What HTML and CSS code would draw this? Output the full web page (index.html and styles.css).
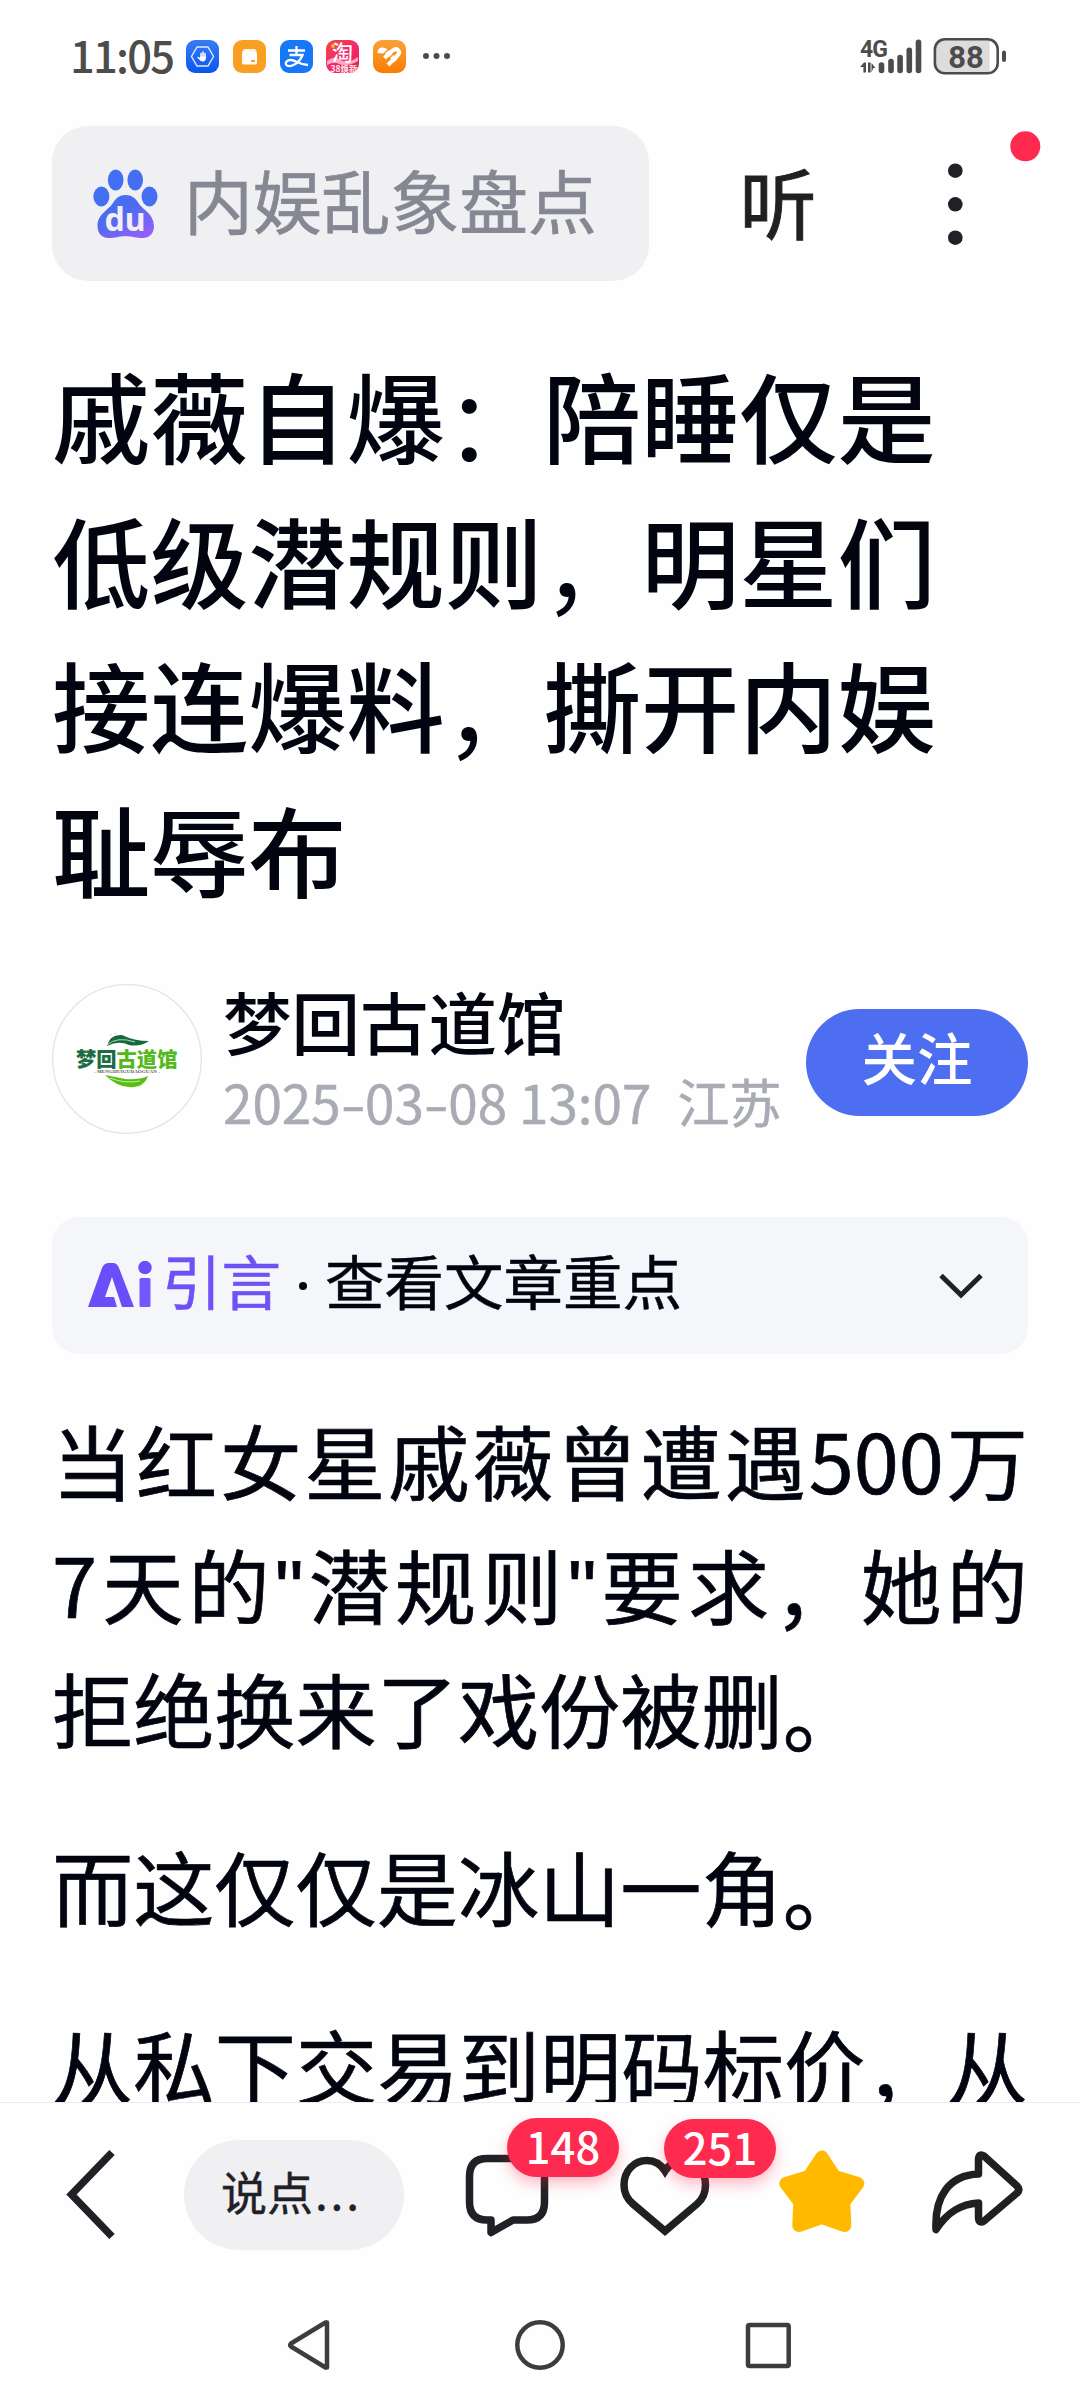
FILE: index.html
```html
<!DOCTYPE html>
<html lang="zh-CN">
<head>
<meta charset="utf-8">
<title>戚薇自爆</title>
<link rel="stylesheet" href="styles.css">
</head>
<body>
<div class="screen">
  <div class="status">
    <span class="clock">11:05</span>
    <div class="apps">
      <svg class="app" viewBox="0 0 33 33"><defs><linearGradient id="gb" x2="0" y2="1"><stop stop-color="#3a7cf5"/><stop offset="1" stop-color="#0a55ee"/></linearGradient></defs><rect width="33" height="33" rx="9" fill="url(#gb)"/><path d="M11 7h11l5.500 9.500-5.500 9.500H11L5.500 16.500z" fill="none" stroke="#dfeaff" stroke-width="1.400"/><path d="M15 17v-3.500M17 17v-5M19 17v-3.500M14.500 19.500l-2.500-2" stroke="#fff" stroke-width="1.500" stroke-linecap="round"/><path d="M14.200 16.500h5.600v2q-.3 3-3 3-2.600 0-3.600-2.500z" fill="#fff"/></svg>
      <svg class="app" viewBox="0 0 33 33"><rect width="33" height="33" rx="9" fill="#f8a024"/><path d="M11 9h11l2 3H9z" fill="#fff5df"/><rect x="9" y="11.500" width="15" height="13" rx="2" fill="#fff"/><path d="M18 20h4v2h-4z" fill="#f8a024"/></svg>
      <svg class="app" viewBox="0 0 33 33"><rect width="33" height="33" rx="9" fill="#1677f8"/><path d="M8 10.500h17M16.500 6v9M9.500 15h13q-2.500 6.500-8 9.500-4.500 2.500-7.500 1-3-2.500 1-5 3.500-1.500 9 1.500 5 2.500 11 3" fill="none" stroke="#fff" stroke-width="2.300"/></svg>
      <svg class="app" viewBox="0 0 33 33"><defs><linearGradient id="gt" x1="0" x2="1" y2="1"><stop stop-color="#ef4a3d"/><stop offset=".5" stop-color="#f42a6c"/><stop offset="1" stop-color="#e61e4b"/></linearGradient></defs><rect width="33" height="33" rx="9" fill="url(#gt)"/><path d="M1 21q8-6 12-2 8 6 19-2v4q-10 6-19 3-5-3-12 1z" fill="#ffa9c4"/><circle cx="7" cy="6" r="2" fill="#ffb52e"/><text x="6" y="20" class="tao">淘</text><text x="4.500" y="31.500" class="sale">38焕新</text></svg>
      <svg class="app" viewBox="0 0 33 33"><defs><linearGradient id="go" x2="0" y2="1"><stop stop-color="#f9a13a"/><stop offset="1" stop-color="#fb7c02"/></linearGradient></defs><rect width="33" height="33" rx="9" fill="url(#go)"/><path d="M4.500 13q0-5.500 5-5.500 3 0 5 2l10 9.500-3 3-8.500-8z" fill="#fff"/><path d="M11.500 18l8-7.500q3-2.500 5.500-.5 2.500 2.500-.5 5.500l-9.500 9.500" fill="none" stroke="#fff" stroke-width="4"/><path d="M9.500 15l7.500-7" stroke="#fa9122" stroke-width="1.300"/><path d="M14 20l7-6.500" stroke="#fa8a18" stroke-width="1.300"/></svg>
    </div>
    <svg class="more" width="30" height="10" viewBox="0 0 30 10"><g fill="#4c4c4c"><circle cx="4" cy="5" r="3"/><circle cx="14.500" cy="5" r="3"/><circle cx="25" cy="5" r="3"/></g></svg>
    <svg class="signal" width="150" height="42" viewBox="858 34 150 42"><text x="860" y="56" class="net">4G</text><g fill="#4c4c4c"><path d="M860 66l4-4.500h2V71.500h-2.600V66zM868 61.500h2.600V71.500H868zM871.500 71.500V62l4 5h-2.200z"/><rect x="878.700" y="61.300" width="5.600" height="11" rx="2.800"/><rect x="888.200" y="57.700" width="5.600" height="14.600" rx="2.800"/><rect x="897.300" y="53.700" width="5.600" height="18.600" rx="2.800"/><rect x="906.500" y="46.500" width="5.600" height="25.800" rx="2.800"/><rect x="915.700" y="38.500" width="5.600" height="33.800" rx="2.800"/><rect x="1002" y="49.500" width="4" height="11.500" rx="2"/></g><path d="M989.700 39H943q-7 0-7 7v18.500q0 7 7 7h46.700z" fill="#dcdcdc"/><rect x="934.900" y="38.300" width="62.800" height="34" rx="10" fill="none" stroke="#4c4c4c" stroke-width="2.600"/><text x="966" y="66.500" class="charge" text-anchor="middle">88</text></svg>
  </div>

  <header class="topbar">
    <div class="search">
      <svg width="66" height="72" viewBox="92 168 66 72"><defs><linearGradient id="gp" x1="0" y1="0" x2=".7" y2="1"><stop stop-color="#3c72f6"/><stop offset=".5" stop-color="#4f6bf0"/><stop offset="1" stop-color="#9060fa"/></linearGradient></defs><g fill="#446ff4"><ellipse cx="115.700" cy="180" rx="7.800" ry="10.500"/><ellipse cx="135.200" cy="180" rx="7.800" ry="10.500"/><ellipse cx="101.400" cy="196.500" rx="8" ry="10"/><ellipse cx="149.500" cy="196.500" rx="8" ry="10"/></g><path d="M125.500 195c6 0 10 3 13 8 4 7 15 10 15.500 23 0 8-5 12-11 12-7 0-11-1.800-17.500-1.800s-10 1.800-17 1.800c-6 0-11-4-11-12 0-12 11-16 15.500-23 3-5 6.500-8 12.500-8z" fill="url(#gp)"/><text x="125" y="231" class="du" text-anchor="middle">du</text></svg>
      <span>内娱乱象盘点</span>
    </div>
    <span class="listen">听</span>
    <svg class="menu" width="88" height="120" viewBox="944 126 100 120"><g fill="#1f2126"><circle cx="955.300" cy="170.700" r="7.300"/><circle cx="955.300" cy="204.300" r="7.300"/><circle cx="955.300" cy="237.700" r="7.300"/></g><circle cx="1025.300" cy="146.300" r="15" fill="#ff2a4f"/></svg>
  </header>

  <main class="article">
    <h1>戚薇自爆<i>：</i>陪睡仅是<br>低级潜规则<i>，</i>明星们<br>接连爆料<i>，</i>撕开内娱<br>耻辱布</h1>

    <section class="author">
      <svg class="avatar" width="150" height="150" viewBox="52 984 150 150"><circle cx="127" cy="1059" r="74.300" fill="#fff" stroke="#e4e4e6" stroke-width="1.300"/><path d="M107 1046q3-12 15-11 12 6 27 6-9 6-20 4-10-5-22 1z" fill="#17683f"/><path d="M107 1045q10-9 28-3M109 1036l3-2M114 1034l3-1" stroke="#bfe3cd" stroke-width=".9" fill="none"/><text x="76" y="1066.500" class="brand"><tspan fill="#1b6b45">梦回</tspan><tspan fill="#53b81c">古道馆</tspan></text><text x="127" y="1072.500" class="brand-sub" text-anchor="middle">- MENGHUIGUDAOGUAN -</text><path d="M105 1075q11 2 20 4 14 1 23-3-3 10-14 11-15 2-29-12z" fill="#59bd15"/><path d="M110 1078q15 6 30 3M138 1086l3 1M142 1083l3 1" stroke="#d4f1bd" stroke-width=".9" fill="none"/></svg>
      <div class="who">
        <div class="name">梦回古道馆</div>
        <div class="meta"><span class="date">2025<b>-</b>03<b>-</b>08 13:07</span><span>江苏</span></div>
      </div>
      <div class="follow">关注</div>
    </section>

    <section class="intro">
      <svg width="66" height="50" viewBox="87 1262 66 50"><path d="M88 1308l14-39q2-5 7-5h4q4 0 6 5l15 39h-12l-10-30-7 20h9l3 10z" fill="#6b4dfb"/><rect x="139.500" y="1279" width="11" height="29" rx="1.500" fill="#7558fb"/><circle cx="145" cy="1268.500" r="6.700" fill="#6b4dfb"/></svg>
      <span class="label">引言</span><i class="dot"></i><span class="hint">查看文章重点</span>
      <svg class="chev" width="48" height="28" viewBox="0 0 48 28"><path d="M4 3.500l20 19.500 20-19.500" fill="none" stroke="#1f2126" stroke-width="5"/></svg>
    </section>

    <p><span class="full">当红女星戚薇曾遭遇500万</span><span class="full">7天的<q>"</q>潜规则<q>"</q>要求<i>，</i>她的</span><span>拒绝换来了戏份被删<i>。</i></span></p>
    <p><span>而这仅仅是冰山一角<i>。</i></span></p>
    <p><span class="full">从私下交易到明码标价<i>，</i>从</span></p>
  </main>

  <footer class="toolbar">
    <svg class="back" width="56" height="96" viewBox="64 2147 56 96"><path d="M112 2152.500l-40.500 42 40.500 42" fill="none" stroke="#1f2126" stroke-width="7.500"/></svg>
    <div class="reply">说点<span>...</span></div>
    <div class="act comment">
      <svg width="90" height="90" viewBox="462 2150 90 90"><path d="M487 2158.500h40q17.500 0 17.500 18v25.500q0 18-17.500 18h-14l-22 12.500v-12.500h-4q-17.500 0-17.500-18v-25.500q0-18 17.500-18z" fill="none" stroke="#1f2126" stroke-width="7.500" stroke-linejoin="round"/></svg>
      <b class="badge">148</b>
    </div>
    <div class="act like">
      <svg width="98" height="90" viewBox="616 2150 98 90"><path d="M665 2171c-5-8-12-10.500-18-10.500-13 0-23 10.500-23 24.500 0 8 3 14 9 19l32 27 32-27c6-5 8.500-11 8.500-19 0-14-9.500-24.500-22.500-24.500-6 0-13 2.500-18 10.500z" fill="none" stroke="#1f2021" stroke-width="7.500"/></svg>
      <b class="badge">251</b>
    </div>
    <svg class="star" width="90" height="90" viewBox="777 2147 90 90"><path d="M821.800 2157l13 19.500 23 7-14 18.500 1 23.500-23-7.800-23 7.800 1-23.500-14-18.500 23-7z" fill="#ffba00" stroke="#ffba00" stroke-width="13" stroke-linejoin="round"/></svg>
    <svg class="share" width="98" height="90" viewBox="929 2147 98 90"><path d="M978.500 2174v-15q.5-6 5.500-3l33 30q3.500 3.500 0 7l-33 28q-5 3-5.500-3v-15c-18 1-31 9-42.500 26.500-1.500-33 13-54.500 42.500-55.500z" fill="none" stroke="#1f2021" stroke-width="7.500" stroke-linejoin="round"/></svg>
  </footer>

  <nav class="sysnav">
    <svg width="52" height="56" viewBox="284 2317 52 56"><path d="M327 2322.500v45q0 0-1.500 0l-34.500-21q-1.500-1.500 0-3l34.500-21z" fill="none" stroke="#3d3d3d" stroke-width="4.500" stroke-linejoin="round"/></svg>
    <svg width="52" height="56" viewBox="514 2317 52 56"><circle cx="540" cy="2345" r="22.700" fill="none" stroke="#3d3d3d" stroke-width="4.500"/></svg>
    <svg width="52" height="56" viewBox="744 2317 52 56"><rect x="748" y="2325" width="40.700" height="41" rx="1.500" fill="none" stroke="#3d3d3d" stroke-width="4.500"/></svg>
  </nav>
</div>
</body>
</html>
```

FILE: styles.css
```css
* { box-sizing: border-box; }
body {
  margin: 0;
  background: #fefefe;
  color: #02040f;
  font-family: "Noto Sans CJK SC", sans-serif;
}
svg { display: block; flex: none; }
.screen {
  width: 1080px;
  height: 2403px;
  display: flex;
  flex-direction: column;
  overflow: hidden;
}

/* status bar */
.status {
  height: 112px;
  flex: none;
  display: flex;
  align-items: center;
  padding: 0 72px 0 70px;
}
.clock {
  width: 116px;
  margin-top: -3px;
  color: #4c4c4c;
  font-size: 43.500px;
  font-weight: 500;
  line-height: 66px;
  letter-spacing: -1.800px;
  white-space: nowrap;
}
.apps { display: flex; gap: 13.800px; }
.app { width: 33px; height: 33px; }
.more { margin-left: 16px; }
.signal { margin-left: auto; }
.net { font: bold 23px Roboto, sans-serif; fill: #4c4c4c; letter-spacing: -1px; }
.charge { font: bold 31px Roboto, sans-serif; fill: #4c4c4c; }
.tao { font-size: 21px; font-weight: 500; fill: #fff; }
.sale { font-size: 8.500px; font-weight: 700; fill: #ffe9ee; }

/* search header */
.topbar {
  height: 155px;
  margin-top: 14px;
  flex: none;
  display: flex;
  align-items: center;
  padding-left: 52px;
}
.search {
  width: 596.500px;
  height: 155px;
  border-radius: 36px;
  background: #f0f0f3;
  display: flex;
  align-items: center;
  gap: 26px;
  padding-left: 40px;
}
.search span {
  font-size: 68.800px;
  line-height: 90px;
  color: #858893;
  margin-top: -10px;
  -webkit-text-stroke: .7px #858893;
}
.du { font: bold 32px "Noto Sans", sans-serif; fill: #f0f0f3; }
.listen {
  margin: -5px 0 0 91px;
  width: 80px;
  font-size: 77px;
  line-height: 100px;
  color: #1f2021;
  -webkit-text-stroke: 1px #1f2021;
}
.menu { width: 100px; margin: -35px 0 0 124px; }

/* article */
.article {
  flex: 1;
  min-height: 0;
  overflow: hidden;
  padding: 60px 52px 0;
}
h1 {
  margin: 0;
  font-size: 98.200px;
  line-height: 144.700px;
  font-weight: 500;
  white-space: nowrap;
}
h1 i, p i {
  font-style: normal;
  font-weight: 400;
  line-height: 0;
  vertical-align: -.05em;
}
.author {
  height: 150px;
  margin-top: 64.500px;
  display: flex;
  align-items: center;
}
.brand { font-size: 20.300px; font-weight: 900; }
.brand-sub { font: bold 5px "Liberation Serif", serif; fill: #555; letter-spacing: .1px; }
.who { margin-left: 21px; width: 583px; padding-top: 2px; }
.name {
  font-size: 68.500px;
  line-height: 82px;
  font-weight: 500;
}
.meta {
  display: flex;
  gap: 26px;
  font-size: 52px;
  line-height: 78px;
  color: #a8abb4;
  white-space: nowrap;
  -webkit-text-stroke: .5px #a8abb4;
}
.date { font-size: 53px; }
.date b {
  display: inline-block;
  font-weight: 400;
  transform: scaleX(1.350);
  margin: 0 3px;
}
.follow {
  width: 222px;
  height: 107px;
  margin-top: 6px;
  border-radius: 54px;
  background: #4e6ef2;
  color: #fff;
  font-size: 55.500px;
  font-weight: 500;
  line-height: 95px;
  text-align: center;
}
.intro {
  height: 137px;
  margin: 83px 0 43px;
  padding: 0 43px 0 35px;
  border-radius: 27px;
  background: #f5f6fa;
  display: flex;
  align-items: center;
  font-size: 59.500px;
}
.label { margin: -13px 0 0 9px; color: #6f51f5; -webkit-text-stroke: .6px #6f51f5; }
.dot { width: 8px; height: 8px; border-radius: 50%; background: #02040f; margin: 0 18px 0 18px; }
.hint { margin-top: -13px; -webkit-text-stroke: .5px #02040f; }
.chev { margin-left: auto; }
p {
  margin: 0 0 55px;
  font-size: 81.200px;
  line-height: 123.700px;
  white-space: nowrap;
  -webkit-text-stroke: .7px #02040f;
}
p span { display: block; }
.full { text-align: justify; text-align-last: justify; white-space: normal; }
q {
  quotes: none;
  font-family: "Liberation Sans", sans-serif;
  line-height: 0;
}

/* bottom toolbar */
.toolbar {
  height: 198px;
  flex: none;
  border-top: 1px solid #ececee;
  display: flex;
  align-items: flex-start;
  padding-left: 64px;
}
.back { margin-top: 44px; }
.reply {
  width: 220px;
  height: 110px;
  margin: 37px 0 0 64px;
  padding-left: 37px;
  border-radius: 55px;
  background: #f0f0f2;
  color: #1f2126;
  font-size: 46px;
  line-height: 101px;
  -webkit-text-stroke: .4px #1f2126;
}
.reply span { letter-spacing: 2.800px; margin-left: 2px; }
.act { position: relative; margin-top: 47px; }
.comment { margin-left: 58px; }
.like { margin-left: 64px; }
.badge {
  position: absolute;
  top: -32px;
  left: 45px;
  width: 112px;
  height: 59px;
  border-radius: 30px;
  background: #ff2a4f;
  box-shadow: 0 7px 14px rgba(255, 42, 79, .3);
  color: #fff;
  font-size: 43.500px;
  font-weight: 500;
  line-height: 56px;
  text-align: center;
}
.like .badge { top: -31px; left: 48px; }
.star { margin: 44px 0 0 63px; }
.share { margin: 44px 0 0 62px; }

/* system navigation */
.sysnav {
  height: 103px;
  flex: none;
  display: flex;
  justify-content: space-between;
  padding: 17px 284px 0;
}
```
